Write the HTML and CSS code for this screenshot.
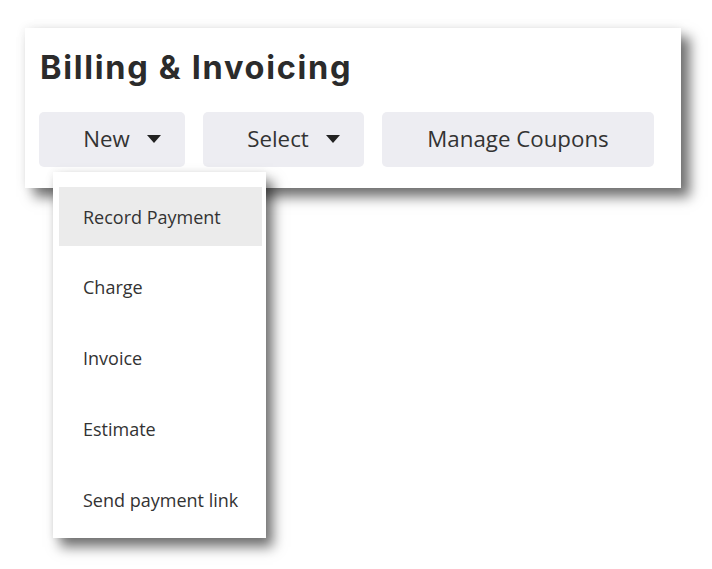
FILE: index.html
```html
<!DOCTYPE html>
<html>
<head>
<meta charset="utf-8">
<link rel="stylesheet" href="styles.css">
</head>
<body>
<div class="stage">
  <div class="card">
    <h1 class="title">Billing &amp; Invoicing</h1>
    <div class="actions">
      <button class="btn btn-drop btn-new">New <span class="caret"></span></button>
      <button class="btn btn-drop btn-select">Select <span class="caret"></span></button>
      <button class="btn btn-plain">Manage Coupons</button>
    </div>
  </div>
  <ul class="menu">
    <li class="item active">Record Payment</li>
    <li class="item">Charge</li>
    <li class="item">Invoice</li>
    <li class="item">Estimate</li>
    <li class="item">Send payment link</li>
  </ul>
</div>
</body>
</html>
```

FILE: styles.css
```css
* { box-sizing: border-box; }
html, body { margin: 0; padding: 0; background: #fff; }
body { font-family: "Open Sans", "Liberation Sans", sans-serif; color: #333; }
.stage { position: relative; width: 712px; height: 569px; padding: 28px 0 0 25px; }
.card {
  width: 656px;
  height: 160px;
  background: #fff;
  padding: 20px 14px 0 14px;
  box-shadow: 0 0 10px rgba(0,0,0,0.08), 9px 9px 12px rgba(0,0,0,0.55);
}
.title {
  margin: 0;
  font-family: "Inter", "Open Sans", sans-serif;
  font-weight: 700;
  font-size: 32.5px;
  letter-spacing: 1.7px;
  line-height: 40px;
  color: #2b2b2b;
  padding-left: 1px;
}
.actions { display: flex; gap: 18px; margin-top: 24px; }
.btn {
  display: flex;
  align-items: center;
  justify-content: center;
  height: 55px;
  border: 0;
  border-radius: 5px;
  background: #ededf2;
  font-family: "Open Sans", sans-serif;
  font-size: 22.3px;
  color: #333;
  padding: 0 45px 3px;
}
.btn-drop { padding: 0 24px 3px 44px; }
.btn-new { width: 146px; }
.btn-select { width: 161px; }
.btn-plain { width: 272px; }
.caret {
  display: inline-block;
  width: 0; height: 0;
  border-left: 7px solid transparent;
  border-right: 7px solid transparent;
  border-top: 8px solid #222;
  margin-left: 17px;
  margin-top: 2px;
}
.menu {
  position: absolute;
  left: 53px;
  top: 172px;
  width: 213px;
  height: 366px;
  margin: 0;
  list-style: none;
  background: #fff;
  padding: 15px 4px 0 6px;
  display: flex;
  flex-direction: column;
  gap: 11.75px;
  box-shadow: 0 0 8px rgba(0,0,0,0.08), 7px 9px 12px rgba(0,0,0,0.55);
}
.item {
  height: 59px;
  display: flex;
  align-items: center;
  padding-left: 24px;
  font-size: 18px;
  color: #333;
}
.item.active { background: #ebebeb; }
```
